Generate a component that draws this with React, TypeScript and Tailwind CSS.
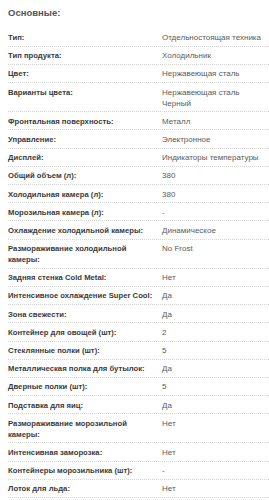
import React from "react";

const rows: [string, string[]][] = [
  ["Тип:", ["Отдельностоящая техника"]],
  ["Тип продукта:", ["Холодильник"]],
  ["Цвет:", ["Нержавеющая сталь"]],
  ["Варианты цвета:", ["Нержавеющая сталь", "Черный"]],
  ["Фронтальная поверхность:", ["Металл"]],
  ["Управление:", ["Электронное"]],
  ["Дисплей:", ["Индикаторы температуры"]],
  ["Общий объем (л):", ["380"]],
  ["Холодильная камера (л):", ["380"]],
  ["Морозильная камера (л):", ["-"]],
  ["Охлаждение холодильной камеры:", ["Динамическое"]],
  ["Размораживание холодильной камеры:", ["No Frost"]],
  ["Задняя стенка Cold Metal:", ["Нет"]],
  ["Интенсивное охлаждение Super Cool:", ["Да"]],
  ["Зона свежести:", ["Да"]],
  ["Контейнер для овощей (шт):", ["2"]],
  ["Стеклянные полки (шт):", ["5"]],
  ["Металлическая полка для бутылок:", ["Да"]],
  ["Дверные полки (шт):", ["5"]],
  ["Подставка для яиц:", ["Да"]],
  ["Размораживание морозильной камеры:", ["Нет"]],
  ["Интенсивная заморозка:", ["Нет"]],
  ["Контейнеры морозильника (шт):", ["-"]],
  ["Лоток для льда:", ["Нет"]],
];

export default function App() {
  return (
    <div
      className="w-[269px] h-[500px] overflow-hidden bg-white pl-2"
      style={{ fontFamily: '"Liberation Sans", Arial, sans-serif' }}
    >
      <div className="pt-[7px] text-[9.5px] leading-[12px] font-bold text-[#555]">Основные:</div>
      <div className="mt-[9.5px]">
        {rows.map(([label, vals], i) => (
          <div
            key={i}
            className="flex pt-[3.5px] pb-[2.7px] border-b border-dotted border-[#d4d4d4] text-[8px] leading-[11px]"
          >
            <div className="w-[154px] shrink-0 font-bold text-[7.7px] text-[#3a3a3a] pr-[2px]">{label}</div>
            <div className="text-[#5a5a5a]">
              {vals.map((v, j) => (
                <div key={j}>{v}</div>
              ))}
            </div>
          </div>
        ))}
      </div>
    </div>
  );
}
